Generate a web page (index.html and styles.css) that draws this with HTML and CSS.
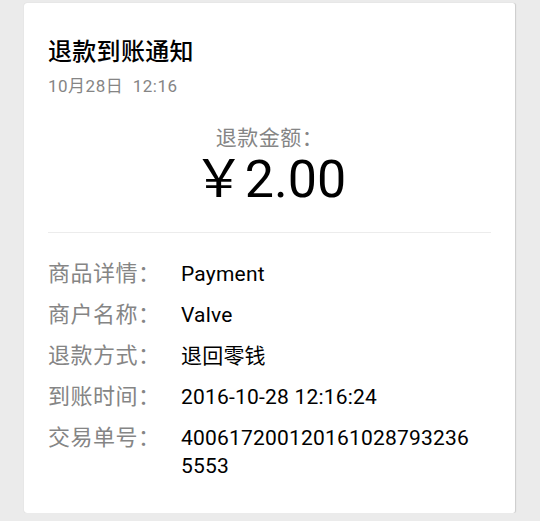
FILE: index.html
```html
<!DOCTYPE html>
<html lang="zh-CN">
<head>
<meta charset="utf-8">
<title>退款到账通知</title>
<link rel="stylesheet" href="styles.css">
</head>
<body>
<div class="card">
  <div class="title">退款到账通知</div>
  <div class="time">10月28日&nbsp;&nbsp;12:16</div>
  <div class="amount-block">
    <div class="amount-label">退款金额：</div>
    <div class="amount">￥2.00</div>
  </div>
  <div class="divider"></div>
  <div class="rows">
    <div class="label">商品详情：</div>
    <div class="value">Payment</div>
    <div class="label">商户名称：</div>
    <div class="value">Valve</div>
    <div class="label">退款方式：</div>
    <div class="value">退回零钱</div>
    <div class="label">到账时间：</div>
    <div class="value">2016-10-28 12:16:24</div>
    <div class="label">交易单号：</div>
    <div class="value order">4006172001201610287932365553</div>
  </div>
</div>
</body>
</html>
```
FILE: styles.css
```css
html, body {
  margin: 0;
  padding: 0;
  background: #ebebeb;
}
body {
  font-family: Roboto, "Noto Sans CJK SC", sans-serif;
  color: #111;
}
.card {
  box-sizing: border-box;
  margin: 3px 0 0 24px;
  width: 492px;
  height: 510px;
  background: #fff;
  border-radius: 3px;
  border-right: 1px solid #cfcfcf;
  box-shadow: 0 0 1px rgba(0,0,0,0.18);
  padding: 34px 24px 30px 24px;
}
.title {
  font-size: 24px;
  line-height: 30px;
  letter-spacing: 0.3px;
  font-weight: 500;
  color: #000;
}
.time {
  margin-top: 9px;
  font-size: 17px;
  line-height: 20px;
  color: #858585;
  letter-spacing: 0.5px;
}
.amount-block {
  margin-top: 30px;
  text-align: center;
}
.amount-label {
  font-size: 21px;
  line-height: 24px;
  color: #858585;
  letter-spacing: 0.5px;
}
.amount {
  margin-top: 0;
  font-size: 52px;
  line-height: 60px;
  color: #000;
}
.divider {
  margin-top: 22px;
  height: 1px;
  background: #ececec;
}
.rows {
  margin-top: 27px;
  display: grid;
  grid-template-columns: 133px 292px;
  row-gap: 13px;
  font-size: 21px;
  line-height: 28px;
}
.label {
  color: #858585;
  font-size: 22px;
  letter-spacing: 0.5px;
}
.value {
  color: #000;
  letter-spacing: 0.2px;
}
.order {
  word-break: break-all;
}
```
